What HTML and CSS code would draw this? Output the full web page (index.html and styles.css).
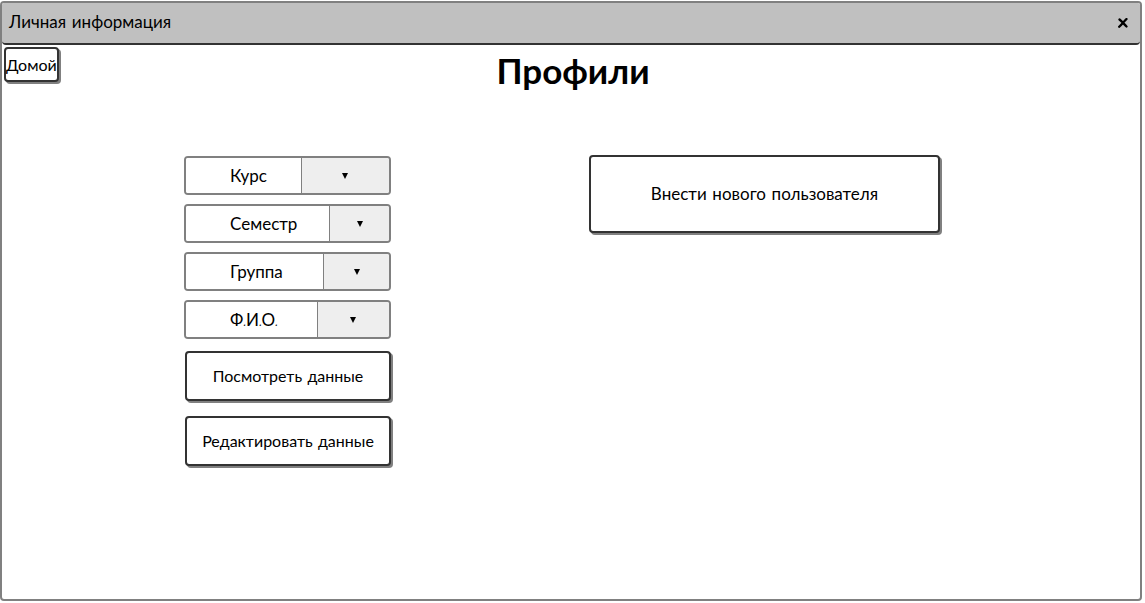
FILE: index.html
```html
<!DOCTYPE html>
<html lang="ru">
<head>
  <meta charset="utf-8">
  <meta name="viewport" content="width=device-width, initial-scale=1">
  <title>Личная информация</title>
  <link rel="stylesheet" href="styles.css">
</head>
<body>
  <div class="window">
    <header class="titlebar">
      <span>Личная информация</span>
      <button class="close" type="button" aria-label="Закрыть">
        <svg width="10" height="10" viewBox="0 0 10 10" aria-hidden="true"><path d="M1.5 1.5C4 3.500 6.500 6.500 8.500 8.500M8.500 1C6 3.500 4 6 1.200 8.800" fill="none" stroke="#000" stroke-width="2.300" stroke-linecap="round"/></svg>
      </button>
    </header>
    <div class="top">
      <button class="button home" type="button">Домой</button>
      <h1 class="heading">Профили</h1>
    </div>
    <main class="content">
      <div class="filters">
        <div class="dropdown dropdown-course">
          <select class="select" aria-label="Курс"><option>Курс</option></select>
          <span class="arrow"><svg width="6" height="6" viewBox="0 0 6 6" aria-hidden="true"><path d="M0 0H6L3 6Z"/></svg></span>
        </div>
        <div class="dropdown dropdown-term">
          <select class="select" aria-label="Семестр"><option>Семестр</option></select>
          <span class="arrow"><svg width="6" height="6" viewBox="0 0 6 6" aria-hidden="true"><path d="M0 0H6L3 6Z"/></svg></span>
        </div>
        <div class="dropdown dropdown-group">
          <select class="select" aria-label="Группа"><option>Группа</option></select>
          <span class="arrow"><svg width="6" height="6" viewBox="0 0 6 6" aria-hidden="true"><path d="M0 0H6L3 6Z"/></svg></span>
        </div>
        <div class="dropdown dropdown-name">
          <select class="select" aria-label="Ф.И.О."><option>Ф.И.О.</option></select>
          <span class="arrow"><svg width="6" height="6" viewBox="0 0 6 6" aria-hidden="true"><path d="M0 0H6L3 6Z"/></svg></span>
        </div>
        <div class="actions">
          <button class="button action" type="button">Посмотреть данные</button>
          <button class="button action" type="button">Редактировать данные</button>
        </div>
      </div>
      <button class="button create" type="button">Внести нового пользователя</button>
    </main>
  </div>
</body>
</html>
```
FILE: styles.css
```css
* {
  box-sizing: border-box;
}

body {
  margin: 0;
  padding: 1px 3px 2px 0;
  min-height: 100vh;
  display: flex;
  background: #fff;
  color: #000;
  font-family: "Comic Sans MS", "Comic Neue", Lato, sans-serif;
  font-size: 17px;
  line-height: 24px;
}

button,
select {
  font: inherit;
  color: inherit;
}

.window {
  flex: 1;
  border: 2px solid #808080;
  border-radius: 4px;
}

.titlebar {
  display: flex;
  align-items: center;
  justify-content: space-between;
  height: 42px;
  padding: 0 12px 0 7px;
  background: #c0c0c0;
  border-bottom: 2px solid #333;
  border-radius: 2px 2px 4px 4px;
}

.close {
  display: flex;
  padding: 0;
  border: 0;
  background: none;
}

.top {
  display: grid;
  grid-template-columns: 1fr auto 1fr;
  align-items: start;
  padding: 2px;
}

.button {
  padding: 2px 0 0;
  background: #fff;
  border: 2px solid #333;
  border-radius: 4px;
  box-shadow: 2px 2px 0 #808080;
}

.home {
  justify-self: start;
  height: 35px;
  font-size: 16px;
}

.heading {
  margin: 0;
  grid-column: 2;
  padding: 2px 0 0 4px;
  font-size: 35px;
  line-height: 48px;
}

.content {
  display: grid;
  grid-template-columns: 182fr 207fr 198fr 351fr 200fr;
  align-items: start;
  padding-top: 56px;
}

.filters {
  grid-column: 2;
  display: grid;
  gap: 9px;
  padding-top: 1px;
}

.dropdown {
  display: flex;
  height: 39px;
  border: 2px solid #808080;
  border-radius: 4px;
  overflow: hidden;
}

.select {
  appearance: none;
  flex: 1;
  min-width: 0;
  padding: 2px 0 0 44px;
  border: 0;
  border-right: 1px solid #808080;
  border-radius: 0;
  background: #fff;
}

.arrow {
  display: flex;
  align-items: center;
  justify-content: center;
  background: #eee;
}

.dropdown-course .arrow {
  width: 43%;
}

.dropdown-term .arrow {
  width: 29%;
}

.dropdown-group .arrow {
  width: 32%;
}

.dropdown-name .arrow {
  width: 35%;
}

.actions {
  display: grid;
  gap: 15px;
  padding: 3px 0 0 1px;
}

.action {
  height: 50px;
  font-size: 16px;
}

.create {
  grid-column: 4;
  height: 78px;
}
```
